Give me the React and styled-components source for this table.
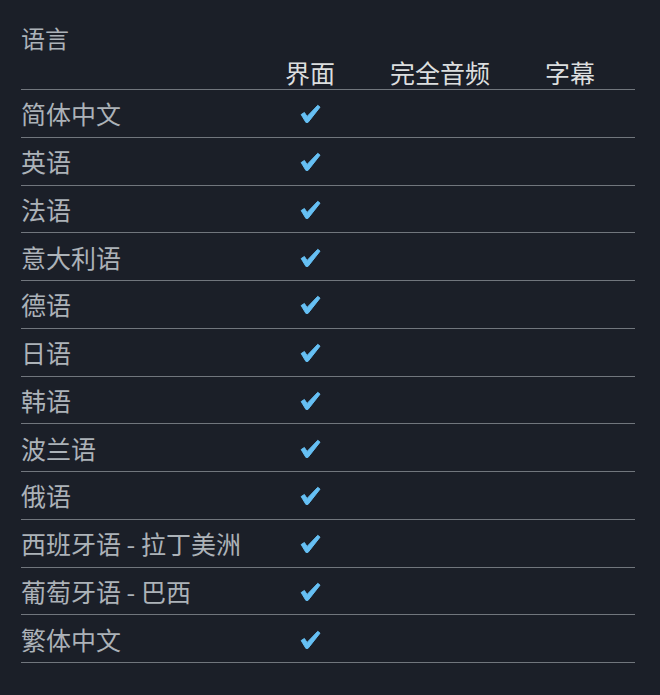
import styled, { createGlobalStyle } from 'styled-components';

const languages = [
    '简体中文',
    '英语',
    '法语',
    '意大利语',
    '德语',
    '日语',
    '韩语',
    '波兰语',
    '俄语',
    '西班牙语 - 拉丁美洲',
    '葡萄牙语 - 巴西',
    '繁体中文',
];

function CheckIcon() {
    return (
        <StyledCheck viewBox="0 0 22 20" width="21" height="20">
            <path
                d="M1.2 10.6 L4.6 8.4 L7.4 12.6 L18.6 0.9 L21 2.8 L8.4 18.8 L6.2 18.8 Z"
                fill="#66c0f4"
                stroke="#66c0f4"
                strokeWidth="1"
                strokeLinejoin="round"
            />
        </StyledCheck>
    );
}

function App() {
    return (
        <>
            <GlobalStyle />
            <StyledPage>
                <StyledTitle>语言</StyledTitle>
                <StyledTable>
                    <StyledHeaderRow>
                        <span />
                        <StyledHeaderCell>界面</StyledHeaderCell>
                        <StyledHeaderCell>完全音频</StyledHeaderCell>
                        <StyledHeaderCell>字幕</StyledHeaderCell>
                        <span />
                    </StyledHeaderRow>
                    {languages.map((name) => (
                        <StyledRow key={name}>
                            <StyledName>{name}</StyledName>
                            <StyledCheckCell><CheckIcon /></StyledCheckCell>
                            <StyledCheckCell />
                            <StyledCheckCell />
                            <span />
                        </StyledRow>
                    ))}
                </StyledTable>
            </StyledPage>
        </>
    );
}

export default App;

const GlobalStyle = createGlobalStyle`
    html, body {
        margin: 0;
        padding: 0;
        background-color: #1b1f28;
    }
    body {
        font-family: "Microsoft YaHei", "Noto Sans CJK SC", "Noto Sans", sans-serif;
    }
`;

const StyledPage = styled.div`
    width: 660px;
    height: 695px;
    box-sizing: border-box;
    padding: 20px 25px 0 21px;
    background-color: #1b1f28;
`;

const StyledTitle = styled.div`
    color: #acb2b8;
    font-size: 24px;
    line-height: 36px;
    height: 36px;
`;

const StyledTable = styled.div`
    display: flex;
    flex-direction: column;
    width: 614px;
`;

const columns = `
    display: grid;
    grid-template-columns: 239px 100px 160px 100px 1fr;
    align-items: center;
    box-sizing: border-box;
    border-bottom: 1px solid #71767d;
`;

const StyledHeaderRow = styled.div`
    ${columns}
    height: 34px;
    padding-bottom: 2px;
`;

const StyledHeaderCell = styled.div`
    color: #dcdedf;
    font-size: 25px;
    line-height: 30px;
    text-align: center;
`;

const StyledRow = styled.div`
    ${columns}
    height: 47.75px;
`;

const StyledName = styled.div`
    color: #acb2b8;
    font-size: 25px;
    line-height: 30px;
    white-space: nowrap;
`;

const StyledCheckCell = styled.div`
    display: flex;
    justify-content: center;
    align-items: center;
    padding-top: 2px;
`;

const StyledCheck = styled.svg`
    display: block;
    margin-left: 1px;
`;
